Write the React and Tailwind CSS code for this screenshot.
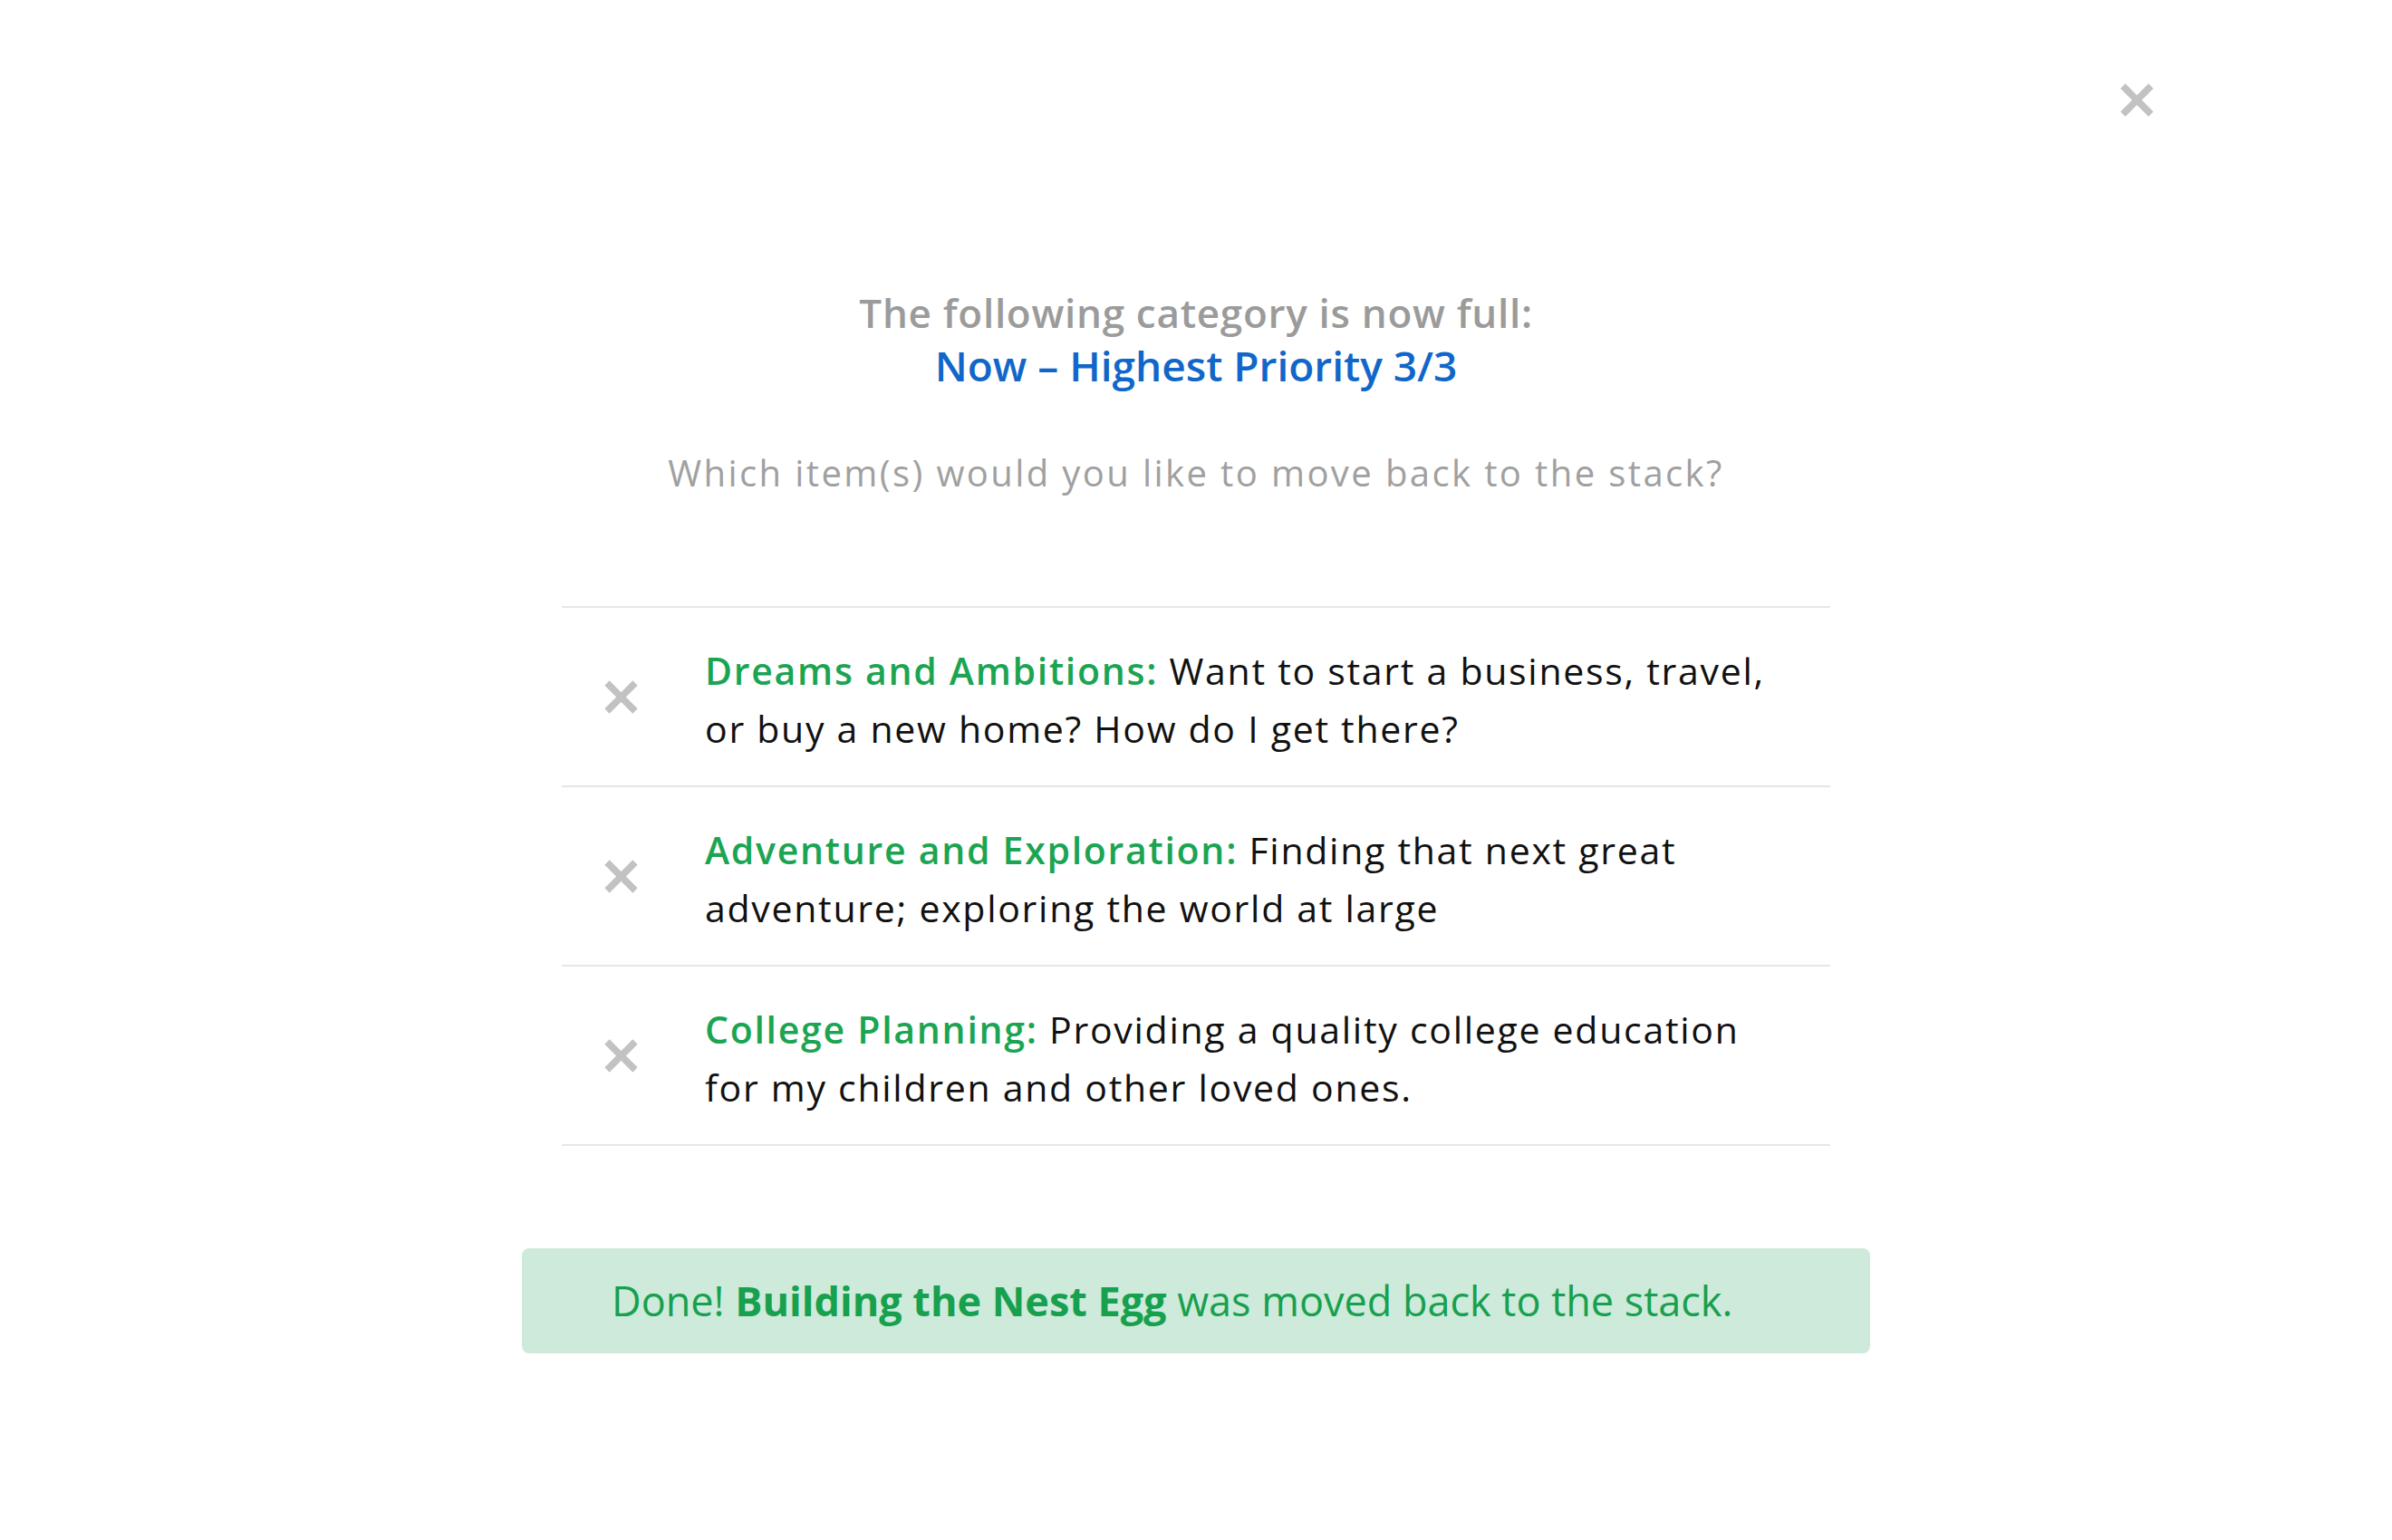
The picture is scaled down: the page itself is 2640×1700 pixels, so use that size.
import React from "react";

const items = [
  {
    id: 1,
    title: "Dreams and Ambitions:",
    lines: ["Want to start a business, travel,", "or buy a new home? How do I get there?"],
  },
  {
    id: 2,
    title: "Adventure and Exploration:",
    lines: ["Finding that next great", "adventure; exploring the world at large"],
  },
  {
    id: 3,
    title: "College Planning:",
    lines: ["Providing a quality college education", "for my children and other loved ones."],
  },
];

const CrossIcon = ({ className }) => (
  <svg viewBox="0 0 37 37" className={className} aria-hidden="true">
    <line x1="3" y1="3" x2="34" y2="34" stroke="currentColor" strokeWidth="7.5" />
    <line x1="34" y1="3" x2="3" y2="34" stroke="currentColor" strokeWidth="7.5" />
  </svg>
);

const App = () => {
  const handleRemove = (id) => {
    console.log("move back", id);
  };

  return (
    <div className="relative min-h-[1700px] w-full bg-white font-['Open_Sans','Noto_Sans',sans-serif]">
      {/* close modal */}
      <button
        className="absolute right-[263px] top-[92px] text-[#c2c2c2] hover:text-gray-500"
        aria-label="Close"
      >
        <CrossIcon className="h-[37px] w-[37px]" />
      </button>

      <div className="mx-auto flex w-[1488px] flex-col items-center pt-[316px]">
        <h2 className="text-center text-[44px] font-semibold leading-[58px] tracking-[0.016em] text-[#9b9b9b]">
          The following category is now full:
          <br />
          <span className="text-[46px] tracking-normal text-[#1167c9]">
            Now – Highest Priority 3/3
          </span>
        </h2>

        <p className="mt-[65px] text-center text-[40px] font-normal leading-[48px] tracking-[0.06em] text-[#a0a0a0]">
          Which item(s) would you like to move back to the stack?
        </p>

        {/* items in the full category */}
        <ul className="mt-[123px] w-[1400px] border-t-2 border-[#e6e6e6]">
          {items.map((item) => (
            <li
              key={item.id}
              className="flex items-center border-b-2 border-[#e6e6e6] pb-[31px] pl-[47px] pt-[37px]"
            >
              <button
                onClick={() => handleRemove(item.id)}
                className="mb-[6px] shrink-0 text-[#c2c2c2] hover:text-red-500"
                aria-label="Move back to stack"
              >
                <CrossIcon className="h-[37px] w-[37px]" />
              </button>
              <p className="ml-[74px] text-[41px] leading-[64px] tracking-[0.042em] text-[#111111]">
                <span className="font-semibold text-[#1ba553]">{item.title}</span>{" "}
                {item.lines[0]}
                <br />
                {item.lines[1]}
              </p>
            </li>
          ))}
        </ul>

        {/* success message */}
        <div className="mt-[113px] flex h-[116px] w-full items-center rounded-lg bg-[#cdeadb] pl-[99px] text-[45px] text-[#17a04e]">
          <span>
            Done! <strong className="font-bold">Building the Nest Egg</strong> was moved
            back to the stack.
          </span>
        </div>
      </div>
    </div>
  );
};

export default App;
